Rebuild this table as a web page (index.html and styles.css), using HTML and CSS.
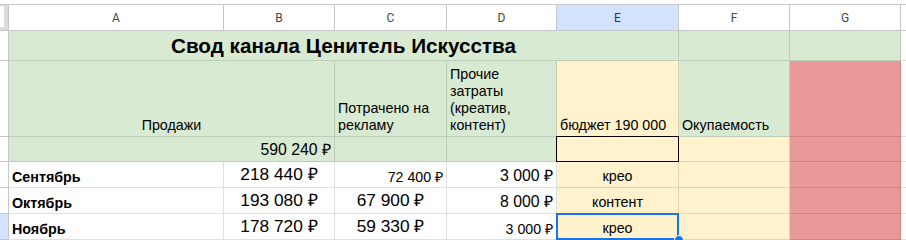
FILE: index.html
```html
<!DOCTYPE html>
<html lang="ru">
<head>
<meta charset="utf-8">
<link rel="stylesheet" href="styles.css">
</head>
<body>
<div class="sheet">
  <div class="corner"><span class="corner-in"></span></div>
  <div class="colh">A</div>
  <div class="colh">B</div>
  <div class="colh">C</div>
  <div class="colh">D</div>
  <div class="colh colh-sel">E</div>
  <div class="colh">F</div>
  <div class="colh">G</div>
  <div class="colh colh-rest"></div>

  <div class="rowh"></div>
  <div class="cell green title span-ae">Свод канала Ценитель Искусства</div>
  <div class="cell green"></div>
  <div class="cell green"></div>
  <div class="cell rest"></div>

  <div class="rowh"></div>
  <div class="cell green span-ab center">Продажи</div>
  <div class="cell green">Потрачено на рекламу</div>
  <div class="cell green">Прочие затраты (креатив, контент)</div>
  <div class="cell yellow">бюджет 190 000</div>
  <div class="cell green">Окупаемость</div>
  <div class="cell red"></div>
  <div class="cell rest"></div>

  <div class="rowh"></div>
  <div class="cell green span-ab right num-m">590 240 ₽</div>
  <div class="cell green"></div>
  <div class="cell green"></div>
  <div class="cell yellow boxed"></div>
  <div class="cell yellow"></div>
  <div class="cell red"></div>
  <div class="cell rest"></div>

  <div class="rowh"></div>
  <div class="cell label">Сентябрь</div>
  <div class="cell center num-l">218 440 ₽</div>
  <div class="cell right num-s">72 400 ₽</div>
  <div class="cell right num-m">3 000 ₽</div>
  <div class="cell yellow center txt">крео</div>
  <div class="cell yellow"></div>
  <div class="cell red"></div>
  <div class="cell rest"></div>

  <div class="rowh"></div>
  <div class="cell label">Октябрь</div>
  <div class="cell center num-l">193 080 ₽</div>
  <div class="cell center num-l">67 900 ₽</div>
  <div class="cell right num-m">8 000 ₽</div>
  <div class="cell yellow center txt">контент</div>
  <div class="cell yellow"></div>
  <div class="cell red"></div>
  <div class="cell rest"></div>

  <div class="rowh rowh-sel"></div>
  <div class="cell label">Ноябрь</div>
  <div class="cell center num-l">178 720 ₽</div>
  <div class="cell center num-l">59 330 ₽</div>
  <div class="cell right num-s">3 000 ₽</div>
  <div class="cell yellow center txt selected">крео<span class="handle"></span></div>
  <div class="cell yellow"></div>
  <div class="cell red"></div>
  <div class="cell rest"></div>
</div>
</body>
</html>
```

FILE: styles.css
```css
html, body {
  margin: 0;
  padding: 0;
  background: #ffffff;
}
body {
  width: 906px;
  height: 240px;
  overflow: hidden;
  font-family: "Liberation Sans", Arial, sans-serif;
  color: #000000;
}
.sheet {
  padding-top: 4px;
  display: grid;
  grid-template-columns: 9px 215px 111px 112px 110px 122px 111px 111px 1fr;
  grid-template-rows: 27px 30px 76px 25px 26px 26px 26px;
}
.corner {
  background: #dadce0;
  border-top: 1px solid #c4c7c5;
  border-bottom: 1px solid #c4c7c5;
  border-right: 1px solid #c4c7c5;
  box-sizing: border-box;
  display: flex;
}
.corner-in {
  width: 4px;
  height: 21px;
  margin-top: 1px;
  background: #ffffff;
}
.colh {
  box-sizing: border-box;
  border-top: 1px solid #c4c7c5;
  border-bottom: 1px solid #c4c7c5;
  border-right: 1px solid #c4c7c5;
  background: #ffffff;
  font-family: Roboto, "Liberation Sans", sans-serif;
  font-size: 12px;
  color: #444746;
  display: flex;
  align-items: center;
  justify-content: center;
  padding-top: 1px;
}
.colh-sel {
  background: #d3e3fd;
  color: #0b3a80;
}
.colh-rest {
  border-right: none;
}
.rowh {
  box-sizing: border-box;
  border-right: 1px solid #c4c7c5;
  border-bottom: 1px solid #c4c7c5;
  background: #ffffff;
}
.rowh-sel {
  background: #d3e3fd;
}
.cell {
  box-sizing: border-box;
  border-right: 1px solid rgba(0, 0, 0, 0.12);
  border-bottom: 1px solid rgba(0, 0, 0, 0.12);
  padding: 0 3px 2px 3px;
  font-size: 14.3px;
  line-height: 17px;
  display: flex;
  flex-direction: column;
  justify-content: flex-end;
  align-items: flex-start;
  white-space: normal;
  overflow: hidden;
}
.rest {
  border-right: none;
}
.green { background: #d9ead3; }
.yellow { background: #fff2cc; }
.red { background: #ea9999; }
.span-ae { grid-column: 2 / 7; }
.span-ab { grid-column: 2 / 4; }
.center { align-items: center; text-align: center; }
.right { align-items: flex-end; text-align: right; }
.title {
  align-items: center;
  font-weight: bold;
  font-size: 20.7px;
  line-height: 24px;
  padding-bottom: 2px;
}
.label {
  font-weight: bold;
  padding-bottom: 1px;
}
.num-l {
  font-size: 17.3px;
  line-height: 20px;
  padding-bottom: 3px;
}
.num-m {
  font-size: 15.8px;
  line-height: 19px;
  padding-bottom: 2px;
}
.num-s {
  font-size: 14.2px;
  line-height: 17px;
  padding-bottom: 1px;
}
.txt {
  padding-bottom: 2px;
}
.boxed, .selected {
  position: relative;
  overflow: visible;
}
.boxed::after {
  content: "";
  position: absolute;
  left: -1px;
  top: -1px;
  right: -1px;
  bottom: -1px;
  border: 1px solid #000000;
}
.selected::after {
  content: "";
  position: absolute;
  left: -1px;
  top: -1px;
  right: -1px;
  bottom: -1px;
  border: 2px solid #1a73e8;
}
.handle {
  position: absolute;
  right: -6px;
  bottom: -6px;
  width: 8px;
  height: 8px;
  border-radius: 50%;
  background: #1a73e8;
  border: 1px solid #ffffff;
  z-index: 2;
}
```
